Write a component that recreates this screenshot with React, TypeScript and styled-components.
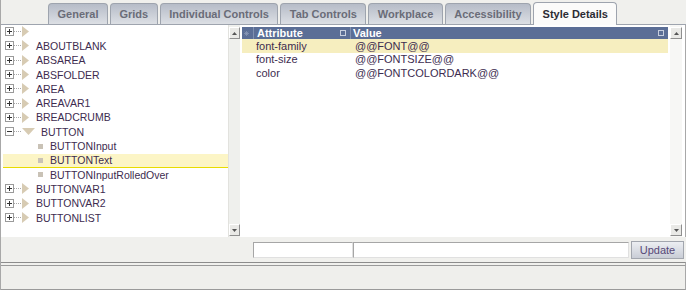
import React from "react";
import styled, { createGlobalStyle } from "styled-components";

const GlobalStyle = createGlobalStyle`
  html, body { margin: 0; padding: 0; }
  body {
    background: #f0f0ed;
    font-family: "Liberation Sans", Arial, sans-serif;
  }
`;

const Page = styled.div`
  width: 686px;
  height: 290px;
  box-sizing: border-box;
  border-left: 1px solid #a8a8a8;
  display: flex;
  flex-direction: column;
  background: #f0f0ed;
  overflow: hidden;
`;

const TabBar = styled.div`
  height: 25px;
  box-sizing: border-box;
  display: flex;
  align-items: flex-end;
  gap: 2px;
  padding-left: 47px;
  border-bottom: 1px solid #9ea4ae;
`;

const Tab = styled.div<{ $active?: boolean }>`
  height: ${(p) => (p.$active ? 23 : 21)}px;
  margin-bottom: ${(p) => (p.$active ? -1 : 0)}px;
  box-sizing: border-box;
  padding: 0 8.5px;
  display: flex;
  align-items: center;
  font: bold 11px "Liberation Sans", Arial, sans-serif;
  color: ${(p) => (p.$active ? "#2c2c34" : "#6a6c78")};
  border: 1px solid #9ea4ae;
  border-bottom: none;
  border-radius: 4px 4px 0 0;
  background: ${(p) =>
    p.$active ? "#fbfbfa" : "linear-gradient(#b6bcc8, #dcdfe4)"};
`;

const Main = styled.div`
  height: 212px;
  display: flex;
  background: #fff;
  border-right: 1px solid #a8a8a8;
`;

const Tree = styled.div`
  width: 227px;
  padding-left: 2px;
  box-sizing: border-box;
  background: #fff;
`;

const TreeRow = styled.div<{ $selected?: boolean; $child?: boolean }>`
  height: 14.3px;
  box-sizing: border-box;
  display: flex;
  align-items: center;
  padding-left: ${(p) => (p.$child ? 35 : 2)}px;
  font-size: 10.5px;
  color: #3d2c4f;
  background: ${(p) => (p.$selected ? "#fcf5c6" : "transparent")};
  border-bottom: 1px solid ${(p) => (p.$selected ? "#e8dc00" : "transparent")};
`;

const Label = styled.span<{ $child?: boolean }>`
  margin-left: ${(p) => (p.$child ? 7 : 6)}px;
  white-space: nowrap;
`;

const Scroll = styled.div<{ $light?: boolean }>`
  width: 12px;
  box-sizing: border-box;
  padding: 2px 0 1px;
  display: flex;
  flex-direction: column;
  justify-content: space-between;
  background: ${(p) => (p.$light ? "#f7f7f5" : "#eff0ed")};
  border-left: 1px solid #e2e2de;
`;

const ScrollBtn = styled.div`
  height: 12px;
  box-sizing: border-box;
  border: 1px solid #fff;
  border-right-color: #8f8f8f;
  border-bottom-color: #8f8f8f;
  background: #e9e9e6;
  display: flex;
  align-items: center;
  justify-content: center;
`;

const Grid = styled.div`
  flex: 1;
  margin-left: 2px;
  padding-top: 2px;
  display: flex;
  flex-direction: column;
`;

const GridHead = styled.div`
  height: 12px;
  display: grid;
  grid-template-columns: 11px 97px 1fr;
  background: #5b6e96;
  font: bold 11px "Liberation Sans", Arial, sans-serif;
  color: #fff;
`;

const HeadCell = styled.div<{ $pad?: number; $first?: boolean }>`
  display: flex;
  align-items: center;
  justify-content: space-between;
  padding: 0 4px 0 ${(p) => p.$pad ?? 3}px;
  border-left: ${(p) => (p.$first ? "none" : "1px solid #8090b0")};
  line-height: 12px;
`;

const HeadIcon = styled.span`
  width: 4px;
  height: 4px;
  border: 1px solid #c6cede;
`;

const GridRow = styled.div<{ $hl?: boolean }>`
  height: 13.6px;
  display: grid;
  grid-template-columns: 11px 97px 1fr;
  align-items: center;
  font-size: 11px;
  color: #3d2c4f;
  background: ${(p) => (p.$hl ? "#f6eebf" : "transparent")};
`;

const Cell = styled.div<{ $pad?: number }>`
  padding-left: ${(p) => p.$pad ?? 3}px;
  white-space: nowrap;
`;

const RightScroll = styled(Scroll)`
  margin: 0 3px 0 2px;
  border-left: none;
`;

const FormRow = styled.div`
  height: 25px;
  display: flex;
  align-items: center;
  padding-left: 252px;
`;

const Field = styled.input<{ $w: number }>`
  width: ${(p) => p.$w}px;
  height: 16px;
  box-sizing: border-box;
  margin: 0;
  border: 1px solid #a6a6a6;
  border-right-color: #e0e0e0;
  border-bottom-color: #e0e0e0;
  background: #fff;
`;

const UpdateBtn = styled.button`
  width: 53px;
  height: 18px;
  margin-left: 2px;
  padding: 0;
  box-sizing: border-box;
  border: 1px solid #a2a6ae;
  background: linear-gradient(#eceef2, #c9cdd6);
  font: 11px "Liberation Sans", Arial, sans-serif;
  color: #574878;
`;

const Divider = styled.div`
  height: 4px;
  box-sizing: border-box;
  border-top: 1px solid #8c8c8c;
  border-bottom: 1px solid #9a9a9a;
  border-right: 1px solid #a8a8a8;
`;

const StatusBar = styled.div`
  height: 24px;
  box-sizing: border-box;
  border-bottom: 1px solid #9a9a9a;
  border-right: 1px solid #a8a8a8;
  background: #efefec;
`;

const Arrow = ({ up }: { up?: boolean }) => (
  <svg width="5" height="3" viewBox="0 0 5 3">
    <path d={up ? "M0 3 L2.5 0 L5 3 Z" : "M0 0 L2.5 3 L5 0 Z"} fill="#555" />
  </svg>
);

const Toggle = ({ open }: { open?: boolean }) => (
  <svg width="17" height="9" viewBox="0 0 17 9">
    <rect x="0.5" y="0.5" width="8" height="8" fill="#fff" stroke="#9a9a9a" />
    <path d="M2 4.5 H7" stroke="#333" />
    {!open && <path d="M4.5 2 V7" stroke="#333" />}
    <path d="M9 4.5 H16" stroke="#aaa" strokeDasharray="1 1" />
  </svg>
);

const Folder = ({ open }: { open?: boolean }) =>
  open ? (
    <svg width="13" height="8" viewBox="0 0 13 8">
      <path d="M0 0 H13 L6.5 7 Z" fill="#d7cbb3" />
    </svg>
  ) : (
    <svg width="8" height="11" viewBox="0 0 8 11">
      <path d="M0 0 L7 5.5 L0 11 Z" fill="#d7cbb3" />
    </svg>
  );

const Leaf = () => (
  <svg width="5" height="5" viewBox="0 0 5 5">
    <rect width="5" height="5" fill="#c9c2b6" />
  </svg>
);

const Star = () => (
  <svg width="7" height="7" viewBox="0 0 7 7">
    <path d="M3.5 0 V7 M0 3.5 H7 M1 1 L6 6 M6 1 L1 6" stroke="#8d9bb8" strokeWidth="1" />
  </svg>
);

type Node = { name: string; child?: boolean; open?: boolean; selected?: boolean };

const nodes: Node[] = [
  { name: "" },
  { name: "ABOUTBLANK" },
  { name: "ABSAREA" },
  { name: "ABSFOLDER" },
  { name: "AREA" },
  { name: "AREAVAR1" },
  { name: "BREADCRUMB" },
  { name: "BUTTON", open: true },
  { name: "BUTTONInput", child: true },
  { name: "BUTTONText", child: true, selected: true },
  { name: "BUTTONInputRolledOver", child: true },
  { name: "BUTTONVAR1" },
  { name: "BUTTONVAR2" },
  { name: "BUTTONLIST" },
];

const attrs = [
  ["font-family", "@@FONT@@"],
  ["font-size", "@@FONTSIZE@@"],
  ["color", "@@FONTCOLORDARK@@"],
];

const tabs = [
  "General",
  "Grids",
  "Individual Controls",
  "Tab Controls",
  "Workplace",
  "Accessibility",
  "Style Details",
];

export default function App() {
  return (
    <Page>
      <GlobalStyle />
      <TabBar>
        {tabs.map((t) => (
          <Tab key={t} $active={t === "Style Details"}>
            {t}
          </Tab>
        ))}
      </TabBar>
      <Main>
        <Tree>
          {nodes.map((n, i) => (
            <TreeRow key={i} $child={n.child} $selected={n.selected}>
              {n.child ? (
                <Leaf />
              ) : (
                <>
                  <Toggle open={n.open} />
                  <Folder open={n.open} />
                </>
              )}
              <Label $child={n.child}>{n.name}</Label>
            </TreeRow>
          ))}
        </Tree>
        <Scroll>
          <ScrollBtn>
            <Arrow up />
          </ScrollBtn>
          <ScrollBtn>
            <Arrow />
          </ScrollBtn>
        </Scroll>
        <Grid>
          <GridHead>
            <HeadCell $pad={2} $first>
              <Star />
            </HeadCell>
            <HeadCell>
              Attribute
              <HeadIcon />
            </HeadCell>
            <HeadCell $pad={2}>
              Value
              <HeadIcon />
            </HeadCell>
          </GridHead>
          {attrs.map(([a, v], i) => (
            <GridRow key={a} $hl={i === 0}>
              <Cell />
              <Cell $pad={3}>{a}</Cell>
              <Cell $pad={5}>{v}</Cell>
            </GridRow>
          ))}
        </Grid>
        <RightScroll $light>
          <ScrollBtn>
            <Arrow up />
          </ScrollBtn>
          <ScrollBtn>
            <Arrow />
          </ScrollBtn>
        </RightScroll>
      </Main>
      <FormRow>
        <Field $w={100} />
        <Field $w={276} />
        <UpdateBtn>Update</UpdateBtn>
      </FormRow>
      <Divider />
      <StatusBar />
    </Page>
  );
}
